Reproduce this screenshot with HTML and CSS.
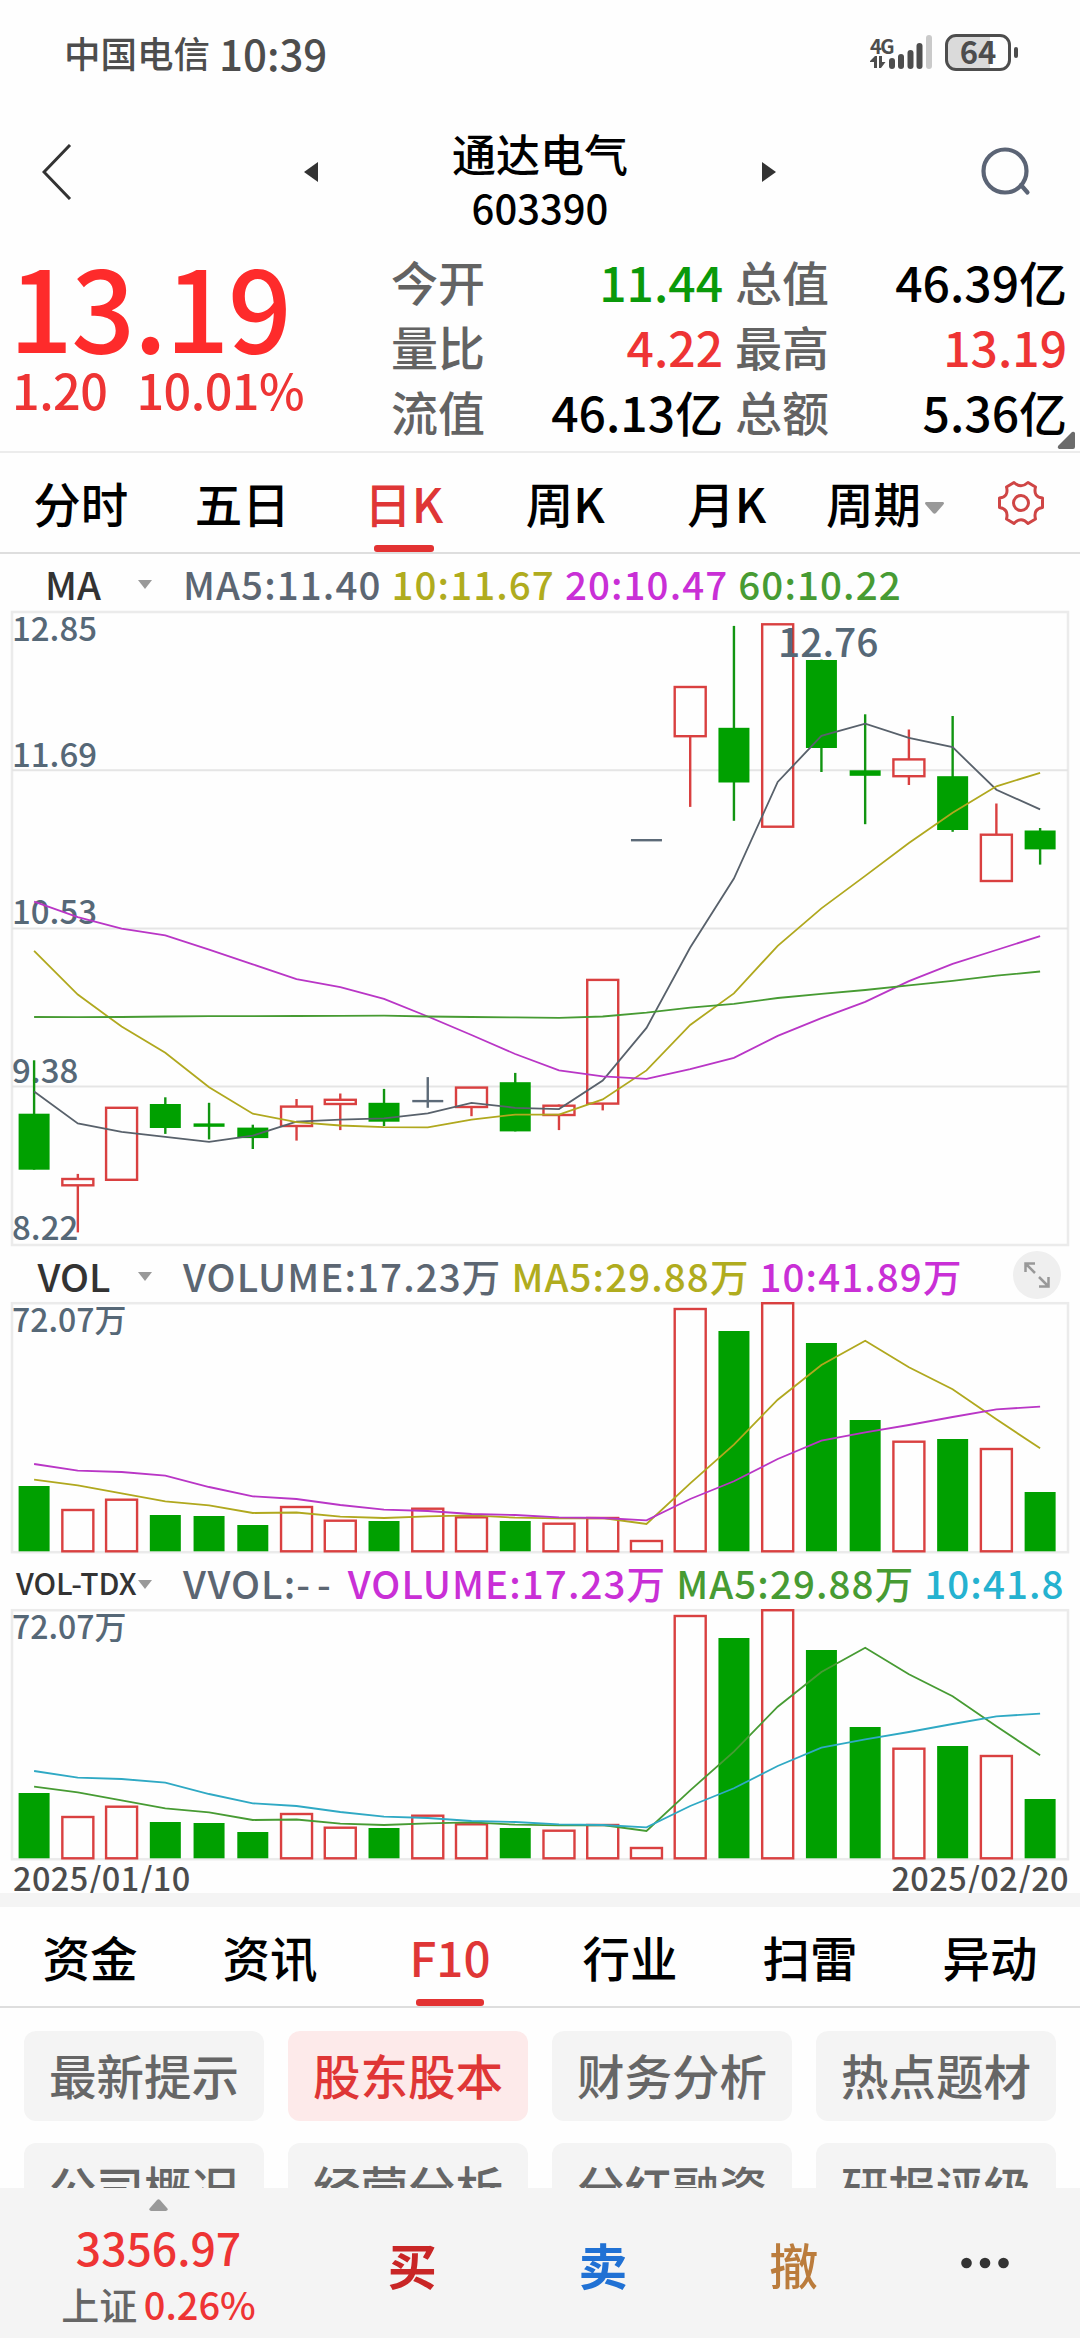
FILE: index.html
```html
<!DOCTYPE html>
<html lang="zh-CN">
<head>
  <meta charset="UTF-8" />
  <meta name="viewport" content="width=device-width, initial-scale=1.0" />
  <title>通达电气 603390</title>
  <link rel="stylesheet" href="styles.css">
</head>
<body>
  <div class="status-bar">
    <span class="carrier">中国电信</span>
    <span class="clock">10:39</span>
    <div class="status-icons">
      <div class="network">
        <span>4G</span>
        <svg width="16" height="12" viewBox="0 0 16 12" fill="#4d4d4d">
          <path d="M0 5L5 0H7V12H4V6H0Z M9 0H12V6H15.500L11 12H9Z" />
        </svg>
      </div>
      <svg class="signal" width="45" height="36" viewBox="0 0 45 36" fill="#4d4d4d">
        <rect x="1" y="23" width="6" height="11" rx="3" />
        <rect x="10" y="19" width="6" height="15" rx="3" />
        <rect x="19.500" y="15" width="6" height="19" rx="3" />
        <rect x="28.500" y="8" width="6" height="26" rx="3" />
        <rect x="38" y="0" width="6" height="34" rx="3" fill="#cacaca" />
      </svg>
      <div class="battery">64</div>
      <div class="battery-tip"></div>
    </div>
  </div>

  <div class="header">
    <svg width="30" height="56" viewBox="0 0 30 56" fill="none" stroke="#333" stroke-width="3"><path d="M28 1L2 28L28 55" /></svg>
    <svg class="prev" width="14" height="20" viewBox="0 0 14 20" fill="#333"><path d="M14 0V20L0 10Z" /></svg>
    <div class="stock">
      <h1>通达电气</h1>
      <span>603390</span>
    </div>
    <svg class="next" width="14" height="20" viewBox="0 0 14 20" fill="#333"><path d="M0 0V20L14 10Z" /></svg>
    <svg width="50" height="50" viewBox="0 0 50 50" fill="none" stroke="#5b6475" stroke-width="4.200" stroke-linecap="round">
      <circle cx="24" cy="24" r="21.500" /><path d="M40 38L46.500 45.500" />
    </svg>
  </div>

  <div class="quote">
    <div class="price">
      <div class="last">13.19</div>
      <div class="change"><span>1.20</span><span>10.01%</span></div>
    </div>
    <div class="quote-grid">
      <span>今开</span><b class="green">11.44</b><span>总值</span><b>46.39亿</b>
      <span>量比</span><b class="red">4.22</b><span>最高</span><b class="red">13.19</b>
      <span>流值</span><b>46.13亿</b><span>总额</span><b>5.36亿</b>
    </div>
    <svg class="corner" width="18" height="18" viewBox="0 0 18 18" fill="#6b6b6b"><path d="M18 2V16Q18 18 16 18H2Q0 17 1 15L15 1Q17 0 18 2Z" /></svg>
  </div>

  <div class="period-tabs">
    <span>分时</span>
    <span>五日</span>
    <span class="active">日K</span>
    <span>周K</span>
    <span>月K</span>
    <span class="more">周期<svg class="caret" width="19" height="12" viewBox="0 0 19 12"><path d="M1 0H18Q20 1 18 3L11 11Q9.500 12.500 8 11L1 3Q-1 1 1 0Z" /></svg></span>
    <svg class="gear" width="48" height="48" viewBox="0 0 48 48" fill="none" stroke="#cf4545" stroke-width="3" stroke-linejoin="round">
      <path d="M9.500 8L17 3.500Q24 10 31 3.500L38.500 8Q36 18 45.500 19V28.500Q36 30 38.500 40L31 44.500Q24 37 17 44.500L9.500 40Q12 30 2.500 28.500V19Q12 18 9.500 8Z" />
      <circle cx="24" cy="24" r="7.500" />
    </svg>
  </div>

  <div class="indicator ma">
    <span class="name">MA</span>
    <svg class="caret" width="14" height="9" viewBox="0 0 19 12"><path d="M0 0H19L9.500 12Z" /></svg>
    <span class="slate">MA5:11.40</span>
    <span class="olive">10:11.67</span>
    <span class="purple">20:10.47</span>
    <span class="leaf">60:10.22</span>
  </div>
  <svg class="chart" id="kline" width="1080" height="636" viewBox="0 0 1080 636"></svg>

  <div class="indicator vol">
    <span class="name">VOL</span>
    <svg class="caret" width="14" height="9" viewBox="0 0 19 12"><path d="M0 0H19L9.500 12Z" /></svg>
    <span class="slate">VOLUME:17.23万</span>
    <span class="olive">MA5:29.88万</span>
    <span class="purple">10:41.89万</span>
    <div class="expand">
      <svg width="26" height="26" viewBox="0 0 26 26" fill="none" stroke="#999" stroke-width="2.500">
        <path d="M1.500 10V1.500H11 M1.500 1.500L11 11 M24.500 15V24.500H15 M24.500 24.500L15 15" />
      </svg>
    </div>
  </div>
  <svg class="chart" id="vol" width="1080" height="253" viewBox="0 0 1080 253"></svg>

  <div class="indicator tdx">
    <span class="name">VOL-TDX</span>
    <svg class="caret" width="14" height="9" viewBox="0 0 19 12"><path d="M0 0H19L9.500 12Z" /></svg>
    <span class="slate">VVOL:<span class="empty">--</span></span>
    <span class="purple">VOLUME:17.23万</span>
    <span class="leaf">MA5:29.88万</span>
    <span class="cyan">10:41.8</span>
  </div>
  <svg class="chart" id="voltdx" width="1080" height="253" viewBox="0 0 1080 253"></svg>
  <div class="dates"><span>2025/01/10</span><span>2025/02/20</span></div>

  <div class="info-tabs">
    <span>资金</span>
    <span>资讯</span>
    <span class="active">F10</span>
    <span>行业</span>
    <span>扫雷</span>
    <span>异动</span>
  </div>
  <div class="f10">
    <span>最新提示</span>
    <span class="active">股东股本</span>
    <span>财务分析</span>
    <span>热点题材</span>
    <span>公司概况</span>
    <span>经营分析</span>
    <span>分红融资</span>
    <span>研报评级</span>
  </div>

  <div class="bottom-bar">
    <div class="index">
      <svg width="19" height="12" viewBox="0 0 19 12" fill="#999"><path d="M8 1Q9.500 -0.500 11 1L18 9Q20 11 17 12H2Q-1 11 1 9Z" /></svg>
      <div class="index-value">3356.97</div>
      <div class="index-change">上证 <span>0.26%</span></div>
    </div>
    <span class="buy">买</span>
    <span class="sell">卖</span>
    <span class="cancel">撤</span>
    <svg width="48" height="12" viewBox="0 0 48 12" fill="#333"><circle cx="5.500" cy="6" r="5.300" /><circle cx="24" cy="6" r="5.300" /><circle cx="42.500" cy="6" r="5.300" /></svg>
  </div>

  <script src="script.js"></script>
</body>
</html>
```
FILE: styles.css
```css
* {
  box-sizing: border-box;
}
body {
  margin: 0;
  width: 1080px;
  height: 2340px;
  overflow: hidden;
  display: flex;
  flex-direction: column;
  background: #fefefe;
  color: #000;
  font-family: "Noto Sans CJK SC", "Noto Sans", sans-serif;
  font-weight: 500;
  white-space: nowrap;
}
body > * {
  flex-shrink: 0;
}
svg {
  display: block;
}

/* status bar */
.status-bar {
  height: 108px;
  padding: 0 62px 4px 64px;
  display: flex;
  align-items: center;
  color: #4d4d4d;
}
.carrier {
  font-size: 36.5px;
}
.clock {
  font-size: 42px;
  margin-left: 9px;
}
.status-icons {
  margin-left: auto;
  display: flex;
  align-items: center;
}
.network {
  width: 18px;
  margin-bottom: 1px;
}
.network span {
  display: block;
  font: bold 20px/21px "Noto Sans CJK SC", sans-serif;
  letter-spacing: -1.5px;
}
.signal {
  margin: 2px 12px 0 0;
}
.battery {
  width: 66px;
  height: 37px;
  border: 3px solid #4d4d4d;
  border-radius: 11px;
  background: linear-gradient(to right, #dadada 70%, #fefefe 70%);
  font: bold 31px/28px "Noto Sans CJK SC", sans-serif;
  text-align: center;
}
.battery-tip {
  width: 4px;
  height: 11px;
  margin-left: 3px;
  border-radius: 2px;
  background: #4d4d4d;
}

/* header */
.header {
  height: 128px;
  padding: 0 49px 0 42px;
  display: flex;
  align-items: center;
}
.prev {
  margin-left: 232px;
}
.stock {
  flex: 1;
  padding-top: 16px;
  text-align: center;
}
.stock h1 {
  margin: 0;
  font-size: 44px;
  font-weight: 500;
  line-height: 54px;
}
.stock span {
  display: block;
  font-size: 40px;
  line-height: 54px;
}
.next {
  margin-right: 205px;
}

/* quote */
.quote {
  position: relative;
  height: 217px;
  padding: 12px 13px 0 9px;
  display: flex;
  border-bottom: 2px solid #ececec;
}
.price {
  width: 382px;
  color: #fe2b2b;
}
.last {
  font-size: 112px;
  line-height: 112px;
  letter-spacing: -1.5px;
}
.change {
  padding-left: 3px;
  display: flex;
  gap: 29px;
  font-size: 48.5px;
  line-height: 58px;
  letter-spacing: -0.5px;
  color: #ee3434;
}
.quote-grid {
  flex: 1;
  display: grid;
  grid-template-columns: 94px 238px 107px 1fr;
  grid-auto-rows: 65px;
  line-height: 66px;
  font-size: 47px;
  color: #636363;
}
.quote-grid span:nth-child(4n + 3) {
  padding-left: 12px;
}
.quote-grid b {
  font-weight: 500;
  font-size: 48px;
  text-align: right;
  color: #000;
}
.quote-grid .green {
  color: #0a990a;
}
.quote-grid .red {
  color: #ee3434;
}
.corner {
  position: absolute;
  right: 5px;
  bottom: 2px;
}

/* period tabs */
.period-tabs {
  height: 101px;
  padding-right: 1px;
  display: grid;
  grid-template-columns: repeat(5, 161.5px) 155px 1fr;
  align-items: center;
  justify-items: center;
  border-bottom: 2px solid #dedede;
  font-size: 47.5px;
  line-height: 98px;
}
.active {
  color: #df3636;
}
.period-tabs .active,
.info-tabs .active {
  position: relative;
}
.period-tabs .active::after,
.info-tabs .active::after {
  content: "";
  position: absolute;
  left: 50%;
  bottom: 0;
  width: 60px;
  height: 7px;
  margin-left: -30px;
  border-radius: 3px;
  background: #e33232;
}
.more {
  display: flex;
  align-items: center;
  gap: 4px;
}
.caret {
  fill: #999;
}
.more .caret {
  margin-top: 10px;
}

/* indicator rows */
.indicator {
  display: flex;
  align-items: center;
  font-size: 38.5px;
  letter-spacing: 1.1px;
}
.indicator .name {
  text-align: center;
  letter-spacing: 0;
  color: #333;
}
.indicator .caret {
  margin: 4px 31px 0 0;
}
.indicator > span + span {
  margin-left: 10px;
}
.indicator .empty {
  letter-spacing: 7px;
}
.ma {
  height: 57px;
}
.ma .name {
  width: 138px;
  padding-left: 8px;
}
.vol {
  height: 55px;
}
.vol .name {
  width: 138px;
  padding-left: 10px;
}
.tdx {
  height: 54px;
}
.tdx .name {
  width: 138px;
  padding-left: 16px;
  text-align: left;
  font-size: 30px;
}
.slate {
  color: #5c6672;
}
.olive {
  color: #b0ac1e;
}
.purple {
  color: #c92fd6;
}
.leaf {
  color: #479b33;
}
.cyan {
  color: #25b2d0;
}
.expand {
  width: 48px;
  height: 48px;
  margin: 0 19px 0 auto;
  display: flex;
  align-items: center;
  justify-content: center;
  border-radius: 50%;
  background: #efefef;
}

/* charts */
.chart {
  overflow: visible;
}
.chart text {
  fill: #566877;
  font-size: 33px;
}
.chart .unit {
  font-size: 32px;
}
.chart .peak {
  font-size: 39px;
}
.frame {
  fill: none;
  stroke: #ebebeb;
  stroke-width: 2.5;
}
.grid {
  stroke: #e5e5e5;
  stroke-width: 2;
}
.up {
  fill: none;
  stroke: #d94040;
  stroke-width: 2.4;
}
.down {
  fill: #00a000;
}
.down-wick {
  stroke: #119511;
  stroke-width: 2.4;
}
.flat {
  stroke: #5c6a78;
  stroke-width: 2.4;
}
.line {
  fill: none;
  stroke-width: 1.8;
}
.dates {
  height: 31px;
  padding: 0 11px 0 13px;
  display: flex;
  justify-content: space-between;
  font-size: 32.5px;
  line-height: 30px;
  letter-spacing: 0.4px;
  color: #4c4c4c;
}

/* info tabs */
.info-tabs {
  height: 115px;
  border-top: 14px solid #f4f4f4;
  border-bottom: 2px solid #dedede;
  display: grid;
  grid-template-columns: repeat(6, 180px);
  justify-items: center;
  font-size: 47.5px;
  line-height: 99px;
}
.info-tabs .active::after {
  width: 68px;
  margin-left: -34px;
}
.f10 {
  height: 180px;
  padding: 23px 24px 0;
  display: grid;
  grid-template-columns: repeat(4, 240px);
  grid-auto-rows: 90px;
  gap: 22px 24px;
  overflow: hidden;
}
.f10 span {
  border-radius: 12px;
  background: #f4f4f4;
  color: #666;
  font-size: 47.5px;
  line-height: 87px;
  text-align: center;
}
.f10 .active {
  background: #fdeaea;
  color: #df3636;
}

/* bottom bar */
.bottom-bar {
  height: 150px;
  display: grid;
  grid-template-columns: 317px repeat(4, 1fr);
  align-items: center;
  justify-items: center;
  background: #f4f4f4;
  font-size: 49px;
}
.index {
  height: 150px;
  padding-top: 11px;
  display: flex;
  flex-direction: column;
  align-items: center;
  font-size: 38px;
  color: #666;
}
.index-value {
  margin-top: 8px;
  font-size: 44.5px;
  line-height: 56px;
  color: #ee3434;
}
.index-change {
  line-height: 58px;
  word-spacing: -2px;
}
.index-change span {
  color: #ee3434;
}
.buy {
  color: #c92626;
  font-weight: 700;
}
.sell {
  color: #2071d4;
  font-weight: 700;
}
.cancel {
  color: #bb7c3c;
}
```
FILE: script.js
```js
const STEP = 43.74;
const LEFT = 34.1;
const BODY = 31;

// [type, high, top, bottom, low]: u = up, d = down, f = flat
const candles = [
  ["d", 449.3, 502.7, 558.7, 558.7], ["u", 562.9, 568, 574.3, 621.4], ["u", 496.8, 496.8, 568.8, 568.8],
  ["d", 486.3, 493, 517, 522.9], ["d", 491.8, 512.4, 515.8, 528.4], ["d", 513.7, 516.6, 527.1, 538],
  ["u", 488, 495.6, 515, 529.6], ["u", 482.5, 488.8, 493, 519.1], ["d", 477.9, 491.8, 510.7, 515],
  ["f", 466.1, 490.1, 490.1, 496.8], ["u", 476.6, 476.6, 496, 505.2], ["d", 461.9, 471.2, 520.4, 520.4],
  ["u", 493.5, 494.7, 504, 519.1], ["u", 368.9, 368.9, 492.6, 499.4], ["f", 229.2, 229.2, 229.2, 229.2],
  ["u", 76, 76, 125.2, 195.9], ["d", 14.9, 116.8, 171.5, 209.8], ["u", 13.3, 13.3, 215.7, 215.7],
  ["d", 48.6, 49, 137, 161], ["d", 103.3, 159.3, 164.8, 213.2], ["u", 118.5, 148.4, 165.2, 174],
  ["d", 105, 165.2, 219, 220.8], ["u", 192.5, 223.7, 270, 270], ["d", 217, 219.5, 238.4, 253.6]
];
const ma5 = [480.4, 512.4, 520.8, 525.9, 530.9, 524.6, 510.7, 508.6, 507.4, 502.3, 491.8, 496.8, 498.1, 469.5, 416.9, 336.5, 267.5, 171, 124.8, 112.6, 126.9, 136.2, 178.7, 198.4];
const ma10 = [339.9, 383.6, 415.6, 441.7, 476.2, 502.7, 511.2, 514.5, 516.2, 516.4, 508.6, 503.6, 503.6, 488.4, 459.4, 413.9, 382.4, 334.8, 297.4, 264.9, 232.1, 201.8, 175.3, 161.8];
const ma20 = [290.6, 306.2, 317.6, 324.3, 338.6, 353.3, 368.1, 376.1, 387.8, 405.5, 424, 443, 459.4, 465.3, 467.8, 458.1, 446.8, 424.9, 407.2, 390.8, 370.2, 352.9, 339, 325.1];
const ma60 = [406, 406.2, 406, 405.5, 405.1, 405.1, 405, 404.8, 404.7, 405.5, 406, 406.4, 406.8, 405.5, 401.7, 396.7, 392.9, 387, 382.8, 379, 374.4, 369.8, 364.7, 360.5];

const bars = [
  ["d", 184], ["u", 208], ["u", 197.7], ["d", 213], ["d", 214], ["d", 223], ["u", 205], ["u", 218.7],
  ["d", 219], ["u", 206.7], ["u", 215.3], ["d", 219], ["u", 221.7], ["u", 216], ["u", 239], ["u", 7],
  ["d", 29], ["u", 1.2], ["d", 41], ["d", 118], ["u", 139.7], ["d", 137], ["u", 147], ["d", 190]
];
const vma5 = [177.7, 183.3, 191.3, 199.3, 203.3, 211, 210.5, 214.7, 216, 214.3, 213.3, 215.7, 216.3, 216, 222, 181.3, 142.7, 97.7, 63, 38.7, 65.3, 87.3, 117.3, 146.3];
const vma10 = [162, 168.7, 170, 173.7, 185, 194.3, 197, 203, 207.7, 209, 212, 213, 215.3, 216, 218.3, 197, 179.3, 157, 138.7, 130.3, 123, 115, 107.3, 104.7];

function x(i) {
  return LEFT + i * STEP;
}
function wick(i, y1, y2, cls) {
  return y1 === y2 ? "" : `<line class="${cls}" x1="${x(i)}" x2="${x(i)}" y1="${y1}" y2="${y2}" />`;
}
function line(values, color) {
  const points = values.map((v, i) => x(i).toFixed(1) + "," + v).join(" ");
  return `<polyline class="line" stroke="${color}" points="${points}" />`;
}

function drawCandle([type, high, top, bottom, low], i) {
  const left = x(i) - BODY / 2;
  if (type === "f") {
    return wick(i, high, low, "flat") + `<line class="flat" x1="${left}" x2="${left + BODY}" y1="${top}" y2="${top}" />`;
  }
  if (type === "u") {
    return wick(i, high, top, "up") + wick(i, bottom, low, "up") +
      `<rect class="up" x="${left}" y="${top}" width="${BODY}" height="${bottom - top}" />`;
  }
  return wick(i, high, low, "down-wick") +
    `<rect class="down" x="${left}" y="${top}" width="${BODY}" height="${bottom - top}" />`;
}

function drawKline() {
  let html = '<rect class="frame" x="12" y="1" width="1056" height="633" />';
  [159.3, 317.5, 475.4].forEach(y => {
    html += `<line class="grid" x1="12" x2="1068" y1="${y}" y2="${y}" />`;
  });
  [["12.85", 30], ["11.69", 155.5], ["10.53", 313.3], ["9.38", 471.6], ["8.22", 629.4]].forEach(([label, y]) => {
    html += `<text x="12" y="${y}">${label}</text>`;
  });
  html += candles.map(drawCandle).join("");
  html += line(ma5, "#58616b") + line(ma10, "#b0a81e") + line(ma20, "#b936c6") + line(ma60, "#479b33");
  html += '<text class="peak" x="778" y="46">12.76</text>';
  document.getElementById("kline").innerHTML = html;
}

function drawVolume(id, color5, color10) {
  let html = '<rect class="frame" x="12" y="1.2" width="1056" height="249" />';
  html += '<text class="unit" x="12" y="30">72.07万</text>';
  bars.forEach(([type, top], i) => {
    const cls = type === "u" ? "up" : "down";
    html += `<rect class="${cls}" x="${x(i) - BODY / 2}" y="${top}" width="${BODY}" height="${249.3 - top}" />`;
  });
  html += line(vma5, color5) + line(vma10, color10);
  document.getElementById(id).innerHTML = html;
}

drawKline();
drawVolume("vol", "#b0a81e", "#b936c6");
drawVolume("voltdx", "#479b33", "#2fa9c4");
```
